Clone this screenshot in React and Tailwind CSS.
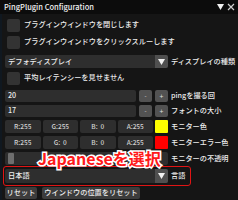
import React from "react";

const F = { fontFamily: '"Noto Sans CJK JP", "Noto Sans", sans-serif' };

function Label({ children }) {
  return <span className="ml-[3px] text-[7.2px] font-medium leading-none text-[#ececec] whitespace-nowrap">{children}</span>;
}

function CheckRow({ text, mt }) {
  return (
    <div className={`flex items-center h-[14px] ${mt}`}>
      <div className="ml-[2px] w-[13px] h-[13px] rounded-[2px] bg-[#333333]" />
      <span className="ml-[4px] text-[7.2px] font-medium leading-none text-[#ececec] whitespace-nowrap">{text}</span>
    </div>
  );
}

function Combo({ value, label, mt, h }) {
  return (
    <div className={`flex items-center ${h} ${mt}`}>
      <div className="flex w-[163px] h-full rounded-[2px] bg-[#2e2e2e] overflow-hidden">
        <div className="flex-1 flex items-center pl-[3px] text-[7.2px] font-medium leading-none text-[#ececec]">{value}</div>
        <div className="w-[13px] h-full bg-[#4f4f4f] flex items-center justify-center">
          <svg width="7" height="6" viewBox="0 0 7 6"><path d="M0 0 H7 L3.5 6 Z" fill="#f0f0f0" /></svg>
        </div>
      </div>
      <Label>{label}</Label>
    </div>
  );
}

function IntRow({ value, label, mt }) {
  return (
    <div className={`flex items-center h-[12px] ${mt}`}>
      <div className="flex w-[163px] h-full gap-[3px]">
        <div className="flex-1 rounded-[2px] bg-[#2e2e2e] flex items-center pl-[3px] text-[7.2px] font-medium leading-none text-[#ececec]">{value}</div>
        <div className="w-[13px] rounded-[2px] bg-[#525252] flex items-center justify-center text-[6px] leading-none text-[#dddddd]">-</div>
        <div className="w-[13px] rounded-[2px] bg-[#525252] flex items-center justify-center text-[7px] leading-none text-[#dddddd]">+</div>
      </div>
      <Label>{label}</Label>
    </div>
  );
}

function ColorRow({ vals, color, label, mt }) {
  return (
    <div className={`flex items-center h-[13px] ${mt}`}>
      <div className="flex w-[163px] h-full gap-[2px]">
        {vals.map((v, i) => (
          <div key={i} className="flex-1 rounded-[2px] bg-[#2e2e2e] flex items-center justify-center text-[6.5px] font-medium leading-none text-[#d4d4d4] whitespace-pre">{v}</div>
        ))}
        <div className="w-[13px] h-full rounded-[1px]" style={{ background: color }} />
      </div>
      <Label>{label}</Label>
    </div>
  );
}

export default function App() {
  return (
    <div className="relative w-[238px] h-[200px] bg-[#151515] overflow-hidden" style={F}>
      <div className="absolute left-0 top-[14px] w-[2px] h-[186px] bg-[#101820]" />
      <div className="flex items-center h-[14px] bg-[#0c0c0c] pl-[4px] pr-[3px]">
        <span className="text-[7.5px] font-medium leading-none text-[#f0f0f0] whitespace-nowrap">PingPlugin Configuration</span>
        <div className="flex-1" />
        <svg width="7" height="6" viewBox="0 0 7 6" className="mr-[3px]"><path d="M0 0 H7 L3.5 6 Z" fill="#f0f0f0" /></svg>
        <svg width="8" height="8" viewBox="0 0 8 8"><path d="M1 1 L7 7 M7 1 L1 7" stroke="#cfcfcf" strokeWidth="1.2" /></svg>
      </div>
      <div className="flex flex-col pl-[5px] pt-[4px]">
        <CheckRow text="プラグインウインドウを閉じします" mt="mt-0" />
        <CheckRow text="プラグインウインドウをクリックスルーします" mt="mt-[3px]" />
        <Combo value="デフォディスプレイ" label="ディスプレイの種類" mt="mt-[6px]" h="h-[13px]" />
        <CheckRow text="平均レイテンシーを見せません" mt="mt-[3px]" />
        <IntRow value="20" label="pingを撮る回" mt="mt-[5px]" />
        <IntRow value="17" label="フォントの大小" mt="mt-[3px]" />
        <ColorRow vals={["R:255", "G:255", "B:  0", "A:255"]} color="#ffff00" label="モニター色" mt="mt-[3px]" />
        <ColorRow vals={["R:255", "G:  0", "B:  0", "A:255"]} color="#ff0000" label="モニターエラー色" mt="mt-[3px]" />
        <div className="flex items-center h-[13px] mt-[3px]">
          <div className="w-[163px] h-full rounded-[2px] bg-[#2e2e2e] flex items-center pl-[3px]">
            <div className="w-[6px] h-[11px] rounded-[1px] bg-[#6e6e6e]" />
          </div>
          <Label>モニターの不透明</Label>
        </div>
        <Combo value="日本語" label="言語" mt="mt-[4px]" h="h-[14px]" />
        <div className="flex items-center h-[12px] mt-[4px] gap-[5px]">
          <div className="h-full w-[32px] rounded-[2px] bg-[#3c3c3c] flex items-center justify-center text-[7.2px] font-medium leading-none text-[#ececec]">リセット</div>
          <div className="h-full w-[98px] rounded-[2px] bg-[#3c3c3c] flex items-center justify-center text-[7.2px] font-medium leading-none text-[#ececec] whitespace-nowrap">ウインドウの位置をリセット</div>
        </div>
      </div>
      <div className="absolute left-[3px] top-[166px] w-[188px] h-[20px] border-[1.5px] border-[#e01414] rounded-[3px]" />
      <div className="absolute left-[38px] top-[150px] text-[16px] font-bold leading-none text-[#ff1a1a] whitespace-nowrap [-webkit-text-stroke:3px_white] [paint-order:stroke_fill]">
        Japaneseを選択
      </div>
    </div>
  );
}
